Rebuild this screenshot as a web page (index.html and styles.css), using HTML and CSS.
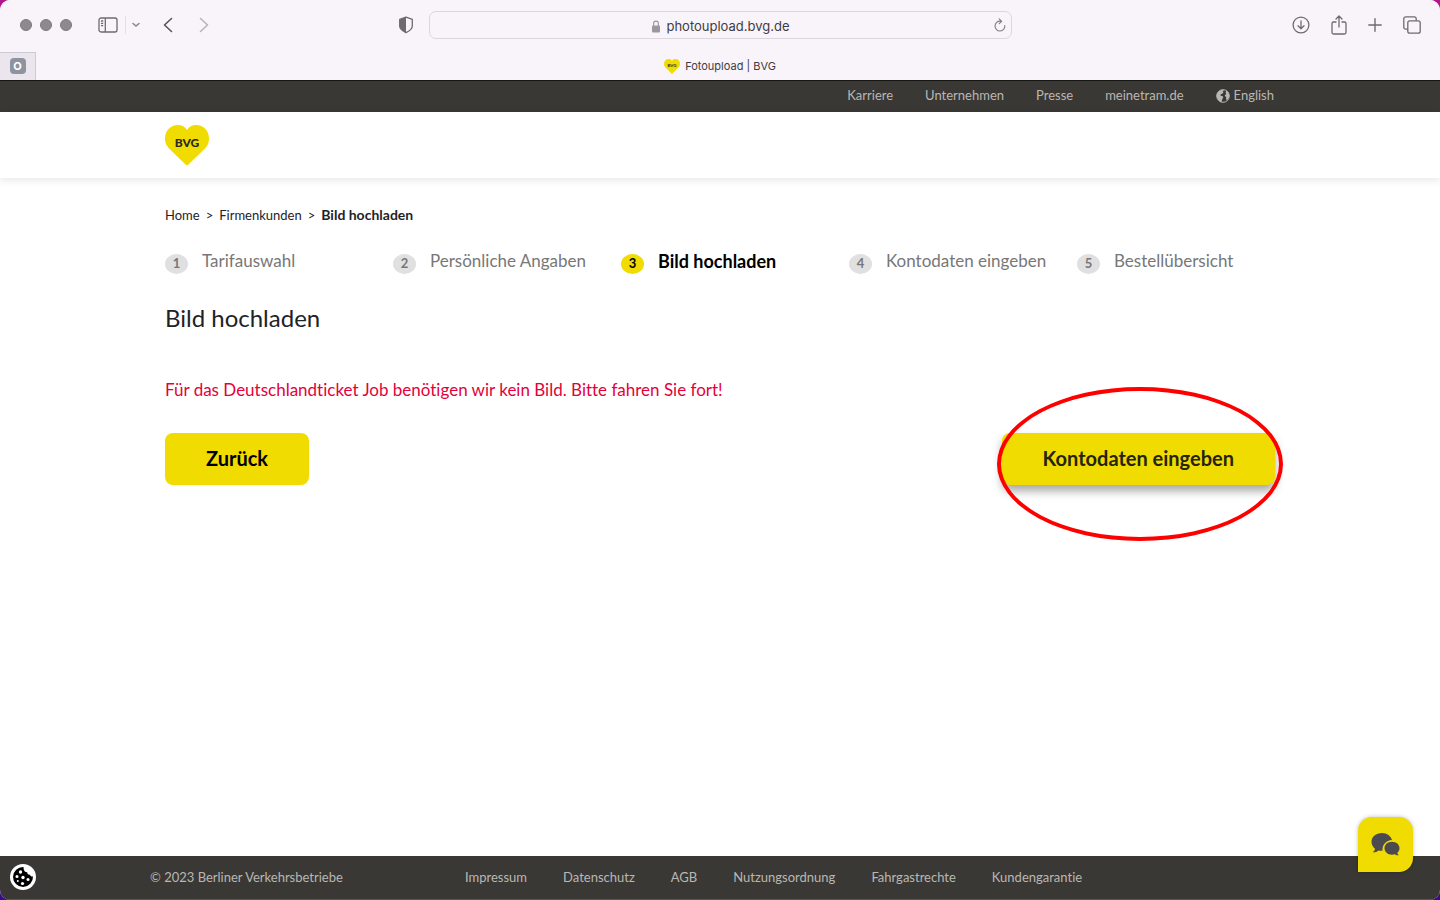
FILE: index.html
```html
<!DOCTYPE html>
<html lang="de">
<head>
<meta charset="utf-8">
<meta name="viewport" content="width=device-width, initial-scale=1">
<title>Fotoupload | BVG</title>
<link rel="stylesheet" href="styles.css">
</head>
<body>
<div class="window">
  <div class="chrome">
    <div class="toolbar">
      <div class="tools tools-left">
        <div class="lights"><i class="light"></i><i class="light"></i><i class="light"></i></div>
        <button class="tool" aria-label="Seitenleiste"><svg width="20" height="16" viewBox="0 0 20 16" fill="none" stroke="#6f6a72" stroke-width="1.3"><rect x="1" y="1" width="18" height="14" rx="2"/><path d="M7.3 1v14M3 4h2.2M3 6.3h2.2M3 8.6h2.2"/></svg></button>
        <span class="divider"></span>
        <button class="tool menu" aria-label="Tabgruppen"><svg width="8" height="6" viewBox="0 0 8 6" fill="none" stroke="#8a858d" stroke-width="1.5" stroke-linecap="round"><path d="M1 1.5 4 4l3-2.500"/></svg></button>
        <button class="tool back" aria-label="Zurück"><svg width="10" height="16" viewBox="0 0 10 16" fill="none" stroke="#59545c" stroke-width="1.6" stroke-linecap="round" stroke-linejoin="round"><path d="M8.500 1.500 1.500 8l7 6.500"/></svg></button>
        <button class="tool" aria-label="Vorwärts"><svg width="10" height="16" viewBox="0 0 10 16" fill="none" stroke="#b9b4bc" stroke-width="1.600" stroke-linecap="round" stroke-linejoin="round"><path d="m1.500 1.500 7 6.500-7 6.500"/></svg></button>
      </div>
      <button class="tool shield" aria-label="Datenschutzbericht"><svg width="16" height="18" viewBox="0 0 16 18"><path d="M8 1.200 14.300 3.400V10c0 3-2.800 5-6.300 6.700C4.500 15 1.700 13 1.700 10V3.400z" fill="none" stroke="#6f6a72" stroke-width="1.300" stroke-linejoin="round"/><path d="M8 1.200V16.700C4.500 15 1.700 13 1.700 10V3.400z" fill="#6f6a72"/></svg></button>
      <div class="address">
        <span class="url"><svg width="10" height="13" viewBox="0 0 10 13"><rect x="1" y="5.500" width="8" height="7" rx="1" fill="#9c979f"/><path d="M2.600 6V3.700a2.400 2.600 0 0 1 4.800 0V6" fill="none" stroke="#9c979f" stroke-width="1.100"/></svg>photoupload.bvg.de</span>
        <button class="tool reload" aria-label="Neu laden"><svg width="12" height="14" viewBox="0 0 12 14" fill="none" stroke="#817c84" stroke-width="1.100" stroke-linecap="round" stroke-linejoin="round"><path d="M10.800 7.500A4.900 4.900 0 1 1 6.400 3.200M5.200.9l2.500 2.400-2.500 2.400"/></svg></button>
      </div>
      <div class="tools tools-right">
        <button class="tool" aria-label="Downloads"><svg width="18" height="18" viewBox="0 0 18 18" fill="none" stroke="#6f6a72" stroke-width="1.300" stroke-linecap="round" stroke-linejoin="round"><circle cx="9" cy="9" r="7.900"/><path d="M9 5v7.500M6 9.700l3 3 3-3"/></svg></button>
        <button class="tool" aria-label="Teilen"><svg width="16" height="20" viewBox="0 0 16 20" fill="none" stroke="#6f6a72" stroke-width="1.300" stroke-linecap="round" stroke-linejoin="round"><path d="M5 7H2.500A1.500 1.500 0 0 0 1 8.500v9A1.500 1.500 0 0 0 2.500 19h11a1.500 1.500 0 0 0 1.500-1.500v-9A1.500 1.500 0 0 0 13.500 7H11M8 12V1.200M5 4l3-3 3 3"/></svg></button>
        <button class="tool" aria-label="Neuer Tab"><svg width="14" height="14" viewBox="0 0 14 14" fill="none" stroke="#6f6a72" stroke-width="1.400" stroke-linecap="round"><path d="M7 .8v12.400M.8 7h12.400"/></svg></button>
        <button class="tool" aria-label="Tabübersicht"><svg width="18" height="18" viewBox="0 0 18 18" fill="none" stroke="#6f6a72" stroke-width="1.300" stroke-linejoin="round"><rect x="4.800" y="4.800" width="12.400" height="12.400" rx="2"/><path d="M4.800 13.200H2.800a2 2 0 0 1-2-2V2.800a2 2 0 0 1 2-2h8.400a2 2 0 0 1 2 2v2"/></svg></button>
      </div>
    </div>
    <div class="tabs">
      <button class="pinned" aria-label="Angehefteter Tab"><span class="pin-icon">O</span></button>
      <div class="tab"><svg class="favicon" width="16" height="15" viewBox="0 0 44 41"><path d="M22 41 3.500 22.500A12.500 12.500 0 0 1 0 13.500C0 5.500 5.500 0 13 0c3.800 0 6.900 1.800 9 5 2.100-3.200 5.200-5 9-5 7.500 0 13 5.500 13 13.500 0 3.500-1.200 6.600-3.500 9z" fill="#f0dc00"/><text x="22" y="23" class="fav-text">BVG</text></svg>Fotoupload | BVG</div>
    </div>
  </div>

  <nav class="meta">
    <div class="container meta-links">
      <a href="#">Karriere</a><a href="#">Unternehmen</a><a href="#">Presse</a><a href="#">meinetram.de</a>
      <a href="#" class="lang"><svg width="14" height="14" viewBox="0 0 14 14"><circle cx="7" cy="7" r="6.300" fill="#3a3834" stroke="#b9b7b3" stroke-width="1"/><path d="M.8 5.500C1.500 3 3.500 1 6.500.7L8 1.500 6.800 2.500 7.500 3.500 5.800 5 4.500 5.600 4.700 6.800 6.700 7.300 7.300 8.600 6.200 10.300 5.500 13.200C3 12.600 1 10 .8 7.500zM10.300 1.600C12 2.600 13.200 4.300 13.300 6.300L12.600 9.500 10.800 11.500 10 9.500 10.300 8 9 7.200 8.800 5.900 10.300 5.200 9.600 3.800z" fill="#b9b7b3"/></svg>English</a>
    </div>
  </nav>

  <header class="brand">
    <div class="container">
      <a href="#" class="logo"><svg width="44" height="40" viewBox="0 0 44 40" role="img" aria-label="BVG"><path d="M22 40c-1 0-1.500-.6-2-1.100L3.500 23A13 13 0 0 1 0 13.500C0 5.500 5.500 0 13 0c3.800 0 6.900 1.800 9 5 2.100-3.200 5.200-5 9-5 7.500 0 13 5.500 13 13.500 0 3.700-1.200 7-3.500 9.500L24 38.900c-.5.500-1 1.100-2 1.100z" fill="#f0dc00"/><text x="22" y="22" class="logo-text">BVG</text></svg></a>
    </div>
  </header>

  <main class="container content">
    <nav class="crumbs" aria-label="Brotkrumen"><a href="#">Home</a><span>&gt;</span><a href="#">Firmenkunden</a><span>&gt;</span><strong>Bild hochladen</strong></nav>
    <ol class="steps">
      <li class="step"><span class="num">1</span>Tarifauswahl</li>
      <li class="step"><span class="num">2</span>Persönliche Angaben</li>
      <li class="step current"><span class="num">3</span>Bild hochladen</li>
      <li class="step"><span class="num">4</span>Kontodaten eingeben</li>
      <li class="step"><span class="num">5</span>Bestellübersicht</li>
    </ol>
    <h1 class="title">Bild hochladen</h1>
    <p class="notice">Für das Deutschlandticket Job benötigen wir kein Bild. Bitte fahren Sie fort!</p>
    <div class="actions">
      <button class="btn">Zurück</button>
      <div class="marked">
        <button class="btn btn-next">Kontodaten eingeben</button>
        <span class="ring"></span>
      </div>
    </div>
  </main>

  <footer class="footer">
    <button class="cookie" aria-label="Cookie-Einstellungen"><svg width="26" height="26" viewBox="0 0 26 26"><circle cx="13" cy="13" r="13" fill="#fff"/><path d="M13.500 3A10 10 0 1 0 23 12.500c-1.500.4-2.700-.3-3-1.700-1.700.3-2.900-.8-2.700-2.500-2.200.2-3.900-1.800-3.800-5.300z" fill="#000"/><g fill="#fff"><circle cx="10.500" cy="8" r="1.700"/><circle cx="7" cy="12.500" r="1.500"/><circle cx="13" cy="13.500" r="1.700"/><circle cx="18" cy="15.500" r="1.500"/><circle cx="12.500" cy="19.500" r="1.600"/><circle cx="7.800" cy="17" r="1"/></g></svg></button>
    <div class="footer-row">
      <span class="copy">© 2023 Berliner Verkehrsbetriebe</span>
      <nav class="footer-links"><a href="#">Impressum</a><a href="#">Datenschutz</a><a href="#">AGB</a><a href="#">Nutzungsordnung</a><a href="#">Fahrgastrechte</a><a href="#">Kundengarantie</a></nav>
    </div>
    <button class="chat" aria-label="Chat"><svg width="30" height="26" viewBox="0 0 30 26" fill="#4a4a4f"><path d="M11 1C5 1 .5 4.700.5 9.800c0 2.800 1.300 5.200 3.500 6.900-.2 1.400-1 2.600-2.500 3.600 2.500.2 4.500-.5 6-1.900 1.400.4 2.700.5 4 .3-.4-6 3.700-10.300 9.500-10.600C20 4.200 16 1 11 1z"/><path d="M21 9.800c-4.200 0-7.500 2.800-7.500 6.400s3.300 6.500 7.500 6.500c1 0 2-.2 2.900-.5 1.100 1 2.500 1.300 4.100 1.100-1-.6-1.600-1.500-1.700-2.500 1.400-1.200 2.200-2.800 2.200-4.600 0-3.600-3.300-6.400-7.500-6.400z"/></svg></button>
  </footer>
</div>
</body>
</html>
```
FILE: styles.css
```css
* { box-sizing: border-box; }
body {
  margin: 0;
  background: linear-gradient(#b0158c, #3a0a8c);
  font-family: Lato, "Open Sans", sans-serif;
  font-variant-ligatures: none;
  color: #1e2327;
}
a { color: inherit; text-decoration: none; }
button { font: inherit; border: 0; padding: 0; background: none; cursor: pointer; }
svg { display: block; }

.window {
  display: flex;
  flex-direction: column;
  min-height: 100vh;
  background: #fff;
  border-radius: 10px;
  overflow: hidden;
}

.chrome {
  background: #f8f4fa;
  border-bottom: 1px solid #161613;
  font-family: Inter, sans-serif;
  color: #403c43;
}
.toolbar { display: flex; align-items: center; height: 52px; padding: 0 19px 2px 20px; }
.tools { display: flex; align-items: center; flex: 1; }
.tools-right { justify-content: flex-end; gap: 21px; }
.lights { display: flex; gap: 8px; margin-right: 26px; }
.light { width: 12px; height: 12px; border-radius: 50%; background: #8e8990; border: 1px solid #7e7981; }
.divider { width: 1px; height: 18px; margin: 0 6px 0 7px; background: #e4dfe7; }
.back { margin: 0 26px 0 23px; }
.shield { margin-right: 15px; }
.address {
  display: flex;
  align-items: center;
  width: 583px;
  height: 28px;
  margin-right: 31px;
  padding: 0 5px 0 17px;
  border: 1px solid #dcd7df;
  border-radius: 7px;
}
.url { display: flex; flex: 1; justify-content: center; align-items: center; gap: 5px; padding-top: 2px; font-size: 13px; }

.tabs { display: flex; height: 28px; }
.pinned {
  display: flex;
  align-items: center;
  justify-content: center;
  width: 36px;
  padding-bottom: 1px;
  background: #ebe6ed;
  border-top: 1px solid #cfcad2;
  border-right: 1px solid #cfcad2;
}
.pin-icon {
  width: 16px;
  height: 16px;
  border-radius: 4px;
  background: #8f92a0;
  color: #fff;
  font-size: 11px;
  font-weight: 700;
  line-height: 17px;
}
.tab { display: flex; flex: 1; align-items: center; justify-content: center; gap: 5px; padding-right: 36px; font-size: 11px; }
.fav-text { font: 900 12px Lato, sans-serif; text-anchor: middle; fill: #3a3834; }

.container { width: 100%; max-width: 1140px; margin: 0 auto; padding: 0 15px; }

.meta { padding-bottom: 2px; background: #3a3834; color: #b9b7b3; font-size: 13px; }
.meta-links { display: flex; justify-content: flex-end; gap: 32px; padding-right: 16px; line-height: 29px; }
.lang { display: flex; align-items: center; gap: 4px; }

.brand { padding: 13px 0; box-shadow: 0 2px 8px rgba(0, 0, 0, .1); }
.logo { display: inline-block; vertical-align: top; }
.logo-text { font: 900 12px Lato, sans-serif; text-anchor: middle; fill: #2a2822; }

.content { flex: 1; padding-top: 27px; }
.crumbs { display: flex; gap: 6px; font-size: 13px; line-height: 20px; }
.crumbs strong { font-size: 14px; }
.steps {
  display: grid;
  grid-template-columns: repeat(5, 1fr);
  margin: 24px -30px 0 0;
  padding: 0;
  list-style: none;
  font-size: 17px;
  line-height: 24px;
  color: #777;
}
.step { display: flex; gap: 14px; }
.num {
  width: 23px;
  height: 20px;
  margin-top: 5px;
  border-radius: 50%;
  background: #e0e0e0;
  font-size: 13px;
  font-weight: 700;
  line-height: 19px;
  text-align: center;
}
.current { color: #000; font-size: 18px; font-weight: 700; }
.current .num { background: #f0dc00; }
.title { margin: 26px 0 0; font-size: 24px; font-weight: 400; line-height: 36px; }
.notice { margin: 42px 0 0; font-size: 17px; line-height: 24px; color: #e4003a; }
.actions { display: flex; justify-content: space-between; margin-top: 31px; }
.btn {
  height: 52px;
  padding: 0 41px 3px;
  border-radius: 8px;
  background: #f0dc00;
  color: #000;
  font-size: 20px;
  font-weight: 700;
}
.btn-next { color: #26240a; box-shadow: 0 6px 10px rgba(0, 0, 0, .35); }
.marked { position: relative; }
.ring {
  position: absolute;
  inset: -46px -8px -56px -5px;
  border: 4px solid #f00;
  border-radius: 50%;
  pointer-events: none;
}

.footer {
  position: relative;
  background: #3a3834;
  border-bottom: 1px solid #5a5854;
  color: #b9b7b3;
  font-size: 13px;
}
.footer-row { display: flex; max-width: 1140px; margin: 0 auto; line-height: 43px; }
.copy { width: 315px; }
.footer-links { display: flex; gap: 36px; }
.cookie { position: absolute; left: 10px; top: 8px; }
.chat {
  position: absolute;
  right: 27px;
  bottom: 27px;
  display: flex;
  align-items: center;
  justify-content: center;
  width: 55px;
  height: 55px;
  border-radius: 14px 14px 14px 0;
  background: #f0dc00;
  box-shadow: 0 0 4px rgba(0, 0, 0, .25);
}
```
